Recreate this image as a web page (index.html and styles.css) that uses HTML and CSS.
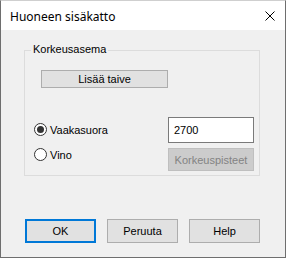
FILE: index.html
```html
<!DOCTYPE html>
<html>
<head>
<meta charset="utf-8">
<link rel="stylesheet" href="styles.css">
</head>
<body>
<div class="window">
  <div class="titlebar">
    <span class="title">Huoneen sisäkatto</span>
    <svg class="close" width="10" height="10" viewBox="0 0 10 10"><path d="M0.5 0.5 L9.5 9.5 M9.5 0.5 L0.5 9.5" stroke="#000" stroke-width="1" fill="none"/></svg>
  </div>
  <div class="content">
    <div class="group">
      <span class="legend">Korkeusasema</span>
      <button class="btn add">Lisää taive</button>
      <div class="row">
        <div class="radios">
          <label class="radio"><span class="dot checked"></span>Vaakasuora</label>
          <label class="radio"><span class="dot"></span>Vino</label>
        </div>
        <div class="side">
          <div class="input">2700</div>
          <button class="btn disabled">Korkeuspisteet</button>
        </div>
      </div>
    </div>
    <div class="actions">
      <button class="btn action default">OK</button>
      <button class="btn action">Peruuta</button>
      <button class="btn action">Help</button>
    </div>
  </div>
</div>
</body>
</html>
```
FILE: styles.css
```css
html, body {
  margin: 0;
  padding: 0;
  background: #f0f0f0;
}
.window {
  width: 286px;
  height: 258px;
  box-sizing: border-box;
  border: 1px solid #6e6e6e;
  border-top-color: #cfcfcf;
  background: #f0f0f0;
  display: flex;
  flex-direction: column;
  font-family: "Liberation Sans", Arial, sans-serif;
  font-size: 11px;
  color: #000;
}
.titlebar {
  height: 29px;
  background: #fff;
  display: flex;
  align-items: center;
  justify-content: space-between;
  padding: 0 10px 0 9px;
}
.title {
  font-family: "Noto Sans", sans-serif;
  font-size: 12px;
  margin-top: 1px;
}
.close {
  margin-top: 1px;
}
.content {
  display: flex;
  flex-direction: column;
  padding-left: 23px;
}
.group {
  position: relative;
  margin-top: 20px;
  width: 236px;
  height: 126px;
  box-sizing: border-box;
  border: 1px solid #dcdcdc;
  padding: 19px 5px 0 9px;
  display: flex;
  flex-direction: column;
  align-items: flex-start;
}
.legend {
  position: absolute;
  top: -8px;
  left: 6px;
  padding: 0 2px;
  line-height: 13px;
  background: #f0f0f0;
}
.btn {
  font-family: "Liberation Sans", Arial, sans-serif;
  font-size: 11px;
  background: #e1e1e1;
  border: 1px solid #adadad;
  color: #000;
  padding: 0;
  margin: 0;
  box-sizing: border-box;
}
.add {
  width: 127px;
  height: 18px;
  margin-left: 7px;
  line-height: 16px;
}
.row {
  display: flex;
  justify-content: space-between;
  align-self: stretch;
  margin-top: 29px;
}
.radios {
  display: flex;
  flex-direction: column;
  gap: 12px;
  padding-top: 6px;
}
.radio {
  display: flex;
  align-items: center;
  gap: 3px;
  height: 13px;
}
.dot {
  width: 13px;
  height: 13px;
  box-sizing: border-box;
  border: 1px solid #333;
  border-radius: 50%;
  background: #fff;
  display: flex;
  align-items: center;
  justify-content: center;
}
.dot.checked::after {
  content: "";
  width: 7px;
  height: 7px;
  border-radius: 50%;
  background: #333;
}
.side {
  display: flex;
  flex-direction: column;
  gap: 5px;
  width: 86px;
}
.input {
  height: 26px;
  box-sizing: border-box;
  border: 1px solid #7a7a7a;
  background: #fff;
  padding: 0 0 0 5px;
  line-height: 24px;
}
.disabled {
  height: 23px;
  background: #cccccc;
  border-color: #bfbfbf;
  color: #838383;
}
.actions {
  display: flex;
  gap: 11px;
  margin-top: 43px;
  margin-left: 1px;
}
.action {
  width: 71px;
  height: 24px;
}
.default {
  border: 2px solid #0078d7;
}
```
